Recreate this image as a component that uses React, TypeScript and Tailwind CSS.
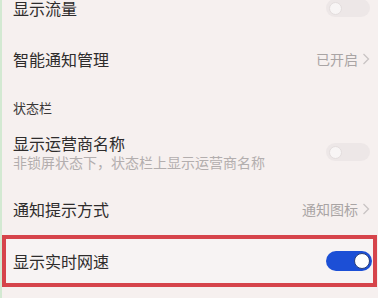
import React from "react";

const font = { fontFamily: '"Noto Sans CJK SC", "Noto Sans", sans-serif' };

function Toggle({ on }: { on: boolean }) {
  if (on) {
    return (
      <div className="relative w-[46px] h-[20px] rounded-full bg-[#1c4fd6] flex items-center justify-end pr-[2px]">
        <div className="w-[16px] h-[16px] rounded-full bg-white border border-[#2a3f7a]" />
      </div>
    );
  }
  return (
    <div className="relative w-[44px] h-[18px] rounded-full bg-[#ede7e7] flex items-center pl-[3px]">
      <div className="w-[13px] h-[13px] rounded-full bg-[#f8f5f5] border border-[#e3dddd]" />
    </div>
  );
}

function Chevron() {
  return (
    <svg width="8" height="12" viewBox="0 0 8 12" className="ml-[4px]">
      <polyline points="1.5,1 6.5,6 1.5,11" fill="none" stroke="#c9c4c4" strokeWidth="1.3" />
    </svg>
  );
}

export default function App() {
  return (
    <div className="w-[378px] h-[298px] overflow-hidden bg-[#f6f0ef] border-l-[2px] border-[#d3e9d2]" style={font}>
      {/* 显示流量 */}
      <div className="-mt-[12px] h-[40px] flex items-center justify-between pl-[11px] pr-[8px]">
        <span className="text-[16px] text-[#2e2c2c]">显示流量</span>
        <Toggle on={false} />
      </div>

      {/* 智能通知管理 */}
      <div className="h-[62px] flex items-center justify-between pl-[11px] pr-[8px]">
        <span className="text-[16px] text-[#2e2c2c]">智能通知管理</span>
        <div className="flex items-center">
          <span className="text-[14px] text-[#a9a4a4]">已开启</span>
          <Chevron />
        </div>
      </div>

      {/* 状态栏 */}
      <div className="h-[36px] flex items-center pl-[11px]">
        <span className="text-[13px] text-[#3a3838]">状态栏</span>
      </div>

      {/* 显示运营商名称 */}
      <div className="h-[60px] pt-[8px] flex items-start justify-between pl-[11px] pr-[8px]">
        <div className="flex flex-col">
          <span className="text-[16px] leading-[18px] text-[#2e2c2c]">显示运营商名称</span>
          <span className="text-[14px] leading-[16px] mt-[2px] text-[#b3aeae]">非锁屏状态下，状态栏上显示运营商名称</span>
        </div>
        <div className="mt-[9px]">
          <Toggle on={false} />
        </div>
      </div>

      {/* 通知提示方式 */}
      <div className="h-[46px] flex items-center justify-between pl-[11px] pr-[8px]">
        <span className="text-[16px] text-[#2e2c2c]">通知提示方式</span>
        <div className="flex items-center">
          <span className="text-[14px] text-[#a9a4a4]">通知图标</span>
          <Chevron />
        </div>
      </div>

      {/* 显示实时网速 */}
      <div className="mt-[3px] mr-[1px] h-[52px] border-[4px] border-[#d6444b] bg-[#f7f3f3] flex items-center justify-between pl-[7px] pr-[1px]">
        <span className="text-[16px] text-[#2e2c2c]">显示实时网速</span>
        <Toggle on={true} />
      </div>
    </div>
  );
}
